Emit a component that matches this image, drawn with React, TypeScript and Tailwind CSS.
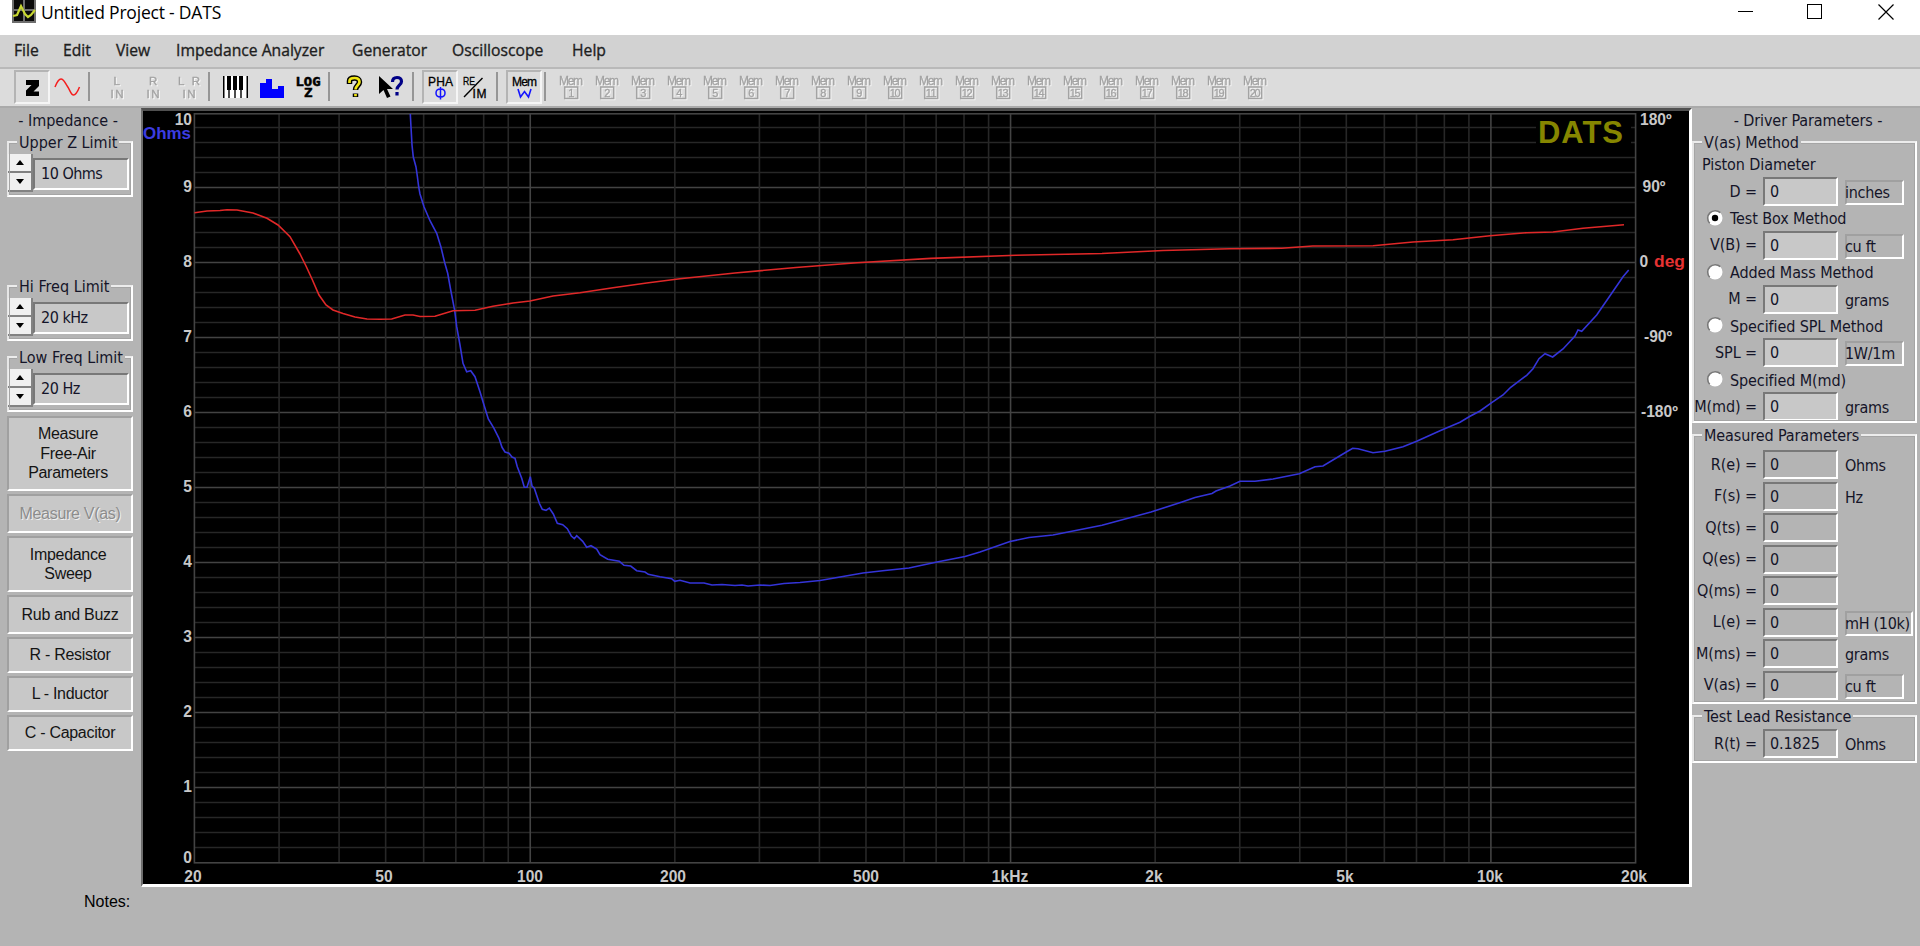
import type { ReactNode } from "react";

const UI_FONT = "font-['DejaVu_Sans_Condensed','DejaVu_Sans',sans-serif] text-[16px]";

const menus = [
  { name: "File", width: "w-[49px]" },
  { name: "Edit", width: "w-[53px]" },
  { name: "View", width: "w-[60px]" },
  { name: "Impedance Analyzer", width: "w-[176px]" },
  { name: "Generator", width: "w-[100px]" },
  { name: "Oscilloscope", width: "w-[120px]" },
  { name: "Help", width: "w-[60px]" },
];

const measured = [
  { label: "R(e) =", unit: "Ohms" },
  { label: "F(s) =", unit: "Hz" },
  { label: "Q(ts) =" },
  { label: "Q(es) =" },
  { label: "Q(ms) =" },
  { label: "L(e) =", unit: "mH (10k)", boxed: true, wide: true },
  { label: "M(ms) =", unit: "grams" },
  { label: "V(as) =", unit: "cu ft", boxed: true },
];

/* ---------- chart data, in window pixels ---------- */

const impedance =
  "410.3,114 411,127 412,145 413.3,157 416,167 417.3,176 418.7,187 420,194 424,206.7 430,220.7 436.7,233.3 441,247.3 444.7,262.7 447.7,273.3 450.7,290 454.7,310.7 456.7,326.7 460,345 463,363.3 466.7,371.7 470.7,370.7 475,376.7 480,391.7 483.3,402.7 488.3,419 494,428.3 499,438.3 502,447.3 505,452 509,453.3 512,457 515,458.3 517.3,466.7 521.7,478.3 524.3,487.3 527,487.3 529,481 530.3,476.7 532,486 534.3,488.3 539.3,503.3 542.3,509.3 546,510.3 549.3,508 553.3,514 557.3,523.3 562.7,524.7 567.3,528.7 571.3,536 574.3,538.7 576.7,535.7 582.7,541.3 586.7,547.3 591,545.7 596.7,549 600,554.7 607.7,559.3 619.3,561.3 624,565.3 630.7,566 636.7,570.7 645,572 648.3,574.3 660,576.7 671.7,578.7 674.7,581.3 680,580.3 690,583 704,583 712,585 722,584.5 735,585.5 742,585 748,586 760,585 770,585.5 784,583.5 800,582.5 820,580.5 840,577 863,573 885,570.5 909,568 937,562 965,556.5 980,552 1010,541.5 1029,537.5 1053,535 1102,525.3 1151,512 1182,502 1195,497.5 1212,493.5 1216,491 1230,486 1240,481.3 1255,481.3 1273,479 1299.3,473.7 1315,466.7 1323,466 1346.7,451.7 1352.7,448.3 1358,448.7 1373,452.7 1385,451.3 1403,446.7 1416.7,441.3 1440,430.7 1460,422.3 1470,416.3 1480,411 1491.7,402.7 1503,395 1510.7,387.3 1526.7,375.3 1533,368.7 1539,358.7 1545,353.7 1552.7,357 1563,349 1575,336 1578,330 1581.7,331.3 1596.7,315 1611.7,293.3 1623,276.7 1628.7,270";

const phase =
  "194.5,212.7 207,211 220,210.5 227,209.7 237,210 253,213 267,218.3 278,225 290,236.7 300,254 306,266 312,279 319,295 326,305 333,310 343,313.5 355,317 367,319 380,319.3 391.7,319 405,315 413,315 420,316.5 435,316.3 453,310.7 475,310.3 493,306.3 513,303 530,301 553,296 580,292.7 613,287.7 646.7,283 680,278.7 735,273 796,267.5 857,262.7 931,258.4 1016,255.3 1102,253.5 1163,250.5 1230,248.7 1281.7,248.3 1312.7,246 1373,245.7 1413,242 1453,239.7 1490,235.7 1526.7,232.7 1553,232 1583,228.3 1624,224.7";

const freqLines = [
  30, 40, 50, 60, 70, 80, 90, 100, 200, 300, 400, 500, 600, 700, 800, 900, 1000,
  2000, 3000, 4000, 5000, 6000, 7000, 8000, 9000, 10000,
];

const freqLabels: [number, string][] = [
  [193, "20"],
  [384, "50"],
  [530, "100"],
  [673, "200"],
  [866, "500"],
  [1010, "1kHz"],
  [1154, "2k"],
  [1345, "5k"],
  [1490, "10k"],
  [1634, "20k"],
];

const degLabels: [number, number, string][] = [
  [1640, 125, "180º"],
  [1642.5, 192, "90º"],
  [1639.5, 267, "0"],
  [1644, 342, "-90º"],
  [1641, 417, "-180º"],
];

const freqX = (f: number) => 194.5 + Math.log10(f / 20) * 480.33;

function Chart() {
  return (
    <div className="h-[779px] w-[1551px] shrink-0 border-t-[3px] border-r-[3px] border-b-[3px] border-l-2 border-t-[#505050] border-r-white border-b-white border-l-[#6e6e6e] bg-black">
      <svg viewBox="143 111 1546 773" width="1546" height="773" className="block">
        {Array.from({ length: 49 }, (_, i) => i + 1).map((i) => (
          <line
            key={i}
            x1="194"
            x2="1636"
            y1={862.6 - i * 15}
            y2={862.6 - i * 15}
            stroke={i % 5 === 0 ? "#434343" : "#272727"}
            strokeWidth="1.5"
          />
        ))}
        {freqLines.map((f) => (
          <line
            key={f}
            y1="113"
            y2="863"
            x1={freqX(f)}
            x2={freqX(f)}
            stroke={f === 100 || f === 1000 || f === 10000 ? "#434343" : "#272727"}
            strokeWidth="1.6"
          />
        ))}
        <rect x="194.4" y="113.8" width="1441.2" height="749" fill="none" stroke="#434343" strokeWidth="1.6" />
        <rect x="1536" y="116" width="95" height="30" fill="#000" />

        <polyline points={impedance} fill="none" stroke="#3434d8" strokeWidth="1.6" />
        <polyline points={phase} fill="none" stroke="#e02828" strokeWidth="1.6" />

        <g className="font-['Liberation_Sans',Arial,sans-serif] font-bold" fill="#c8c8c8" fontSize="15.6">
          {Array.from({ length: 11 }, (_, v) => (
            <text key={v} x="192" y={v === 10 ? 125 : v === 0 ? 863 : 867.3 - v * 75} textAnchor="end">
              {v}
            </text>
          ))}
          {freqLabels.map(([x, text]) => (
            <text key={text} x={x} y="881.5" textAnchor="middle">
              {text}
            </text>
          ))}
          {degLabels.map(([x, y, text]) => (
            <text key={text} x={x} y={y}>
              {text}
            </text>
          ))}
          <text x="143" y="138.5" fill="#3c3ce1" textLength="48" lengthAdjust="spacingAndGlyphs">
            Ohms
          </text>
          <text x="1654" y="267" fill="#e63232" textLength="31" lengthAdjust="spacingAndGlyphs">
            deg
          </text>
          <text x="1538" y="143" fill="#868600" fontSize="31" textLength="85">
            DATS
          </text>
        </g>
      </svg>
    </div>
  );
}

/* ---------- title bar, menu, toolbar ---------- */

function TitleBar() {
  return (
    <div className="flex h-[35px] items-start bg-white">
      <svg width="24" height="23" viewBox="0 0 24 23" className="ml-3">
        <rect width="24" height="23" fill="#6e6e6e" />
        <path d="M2 0h9v9H2zM13 0h9v9h-9zM2 11h9v10H2zM13 11h9v10h-9z" fill="#0a0a0a" />
        <path d="M1 16l4-1 4-9 4 8 3 3 3-2 4-5" fill="none" stroke="#c8d732" strokeWidth="2.2" />
      </svg>
      <span className="ml-[5px] font-['Open_Sans','Noto_Sans',sans-serif] text-[17.5px] leading-[25px] tracking-[-0.2px] text-black">
        Untitled Project - DATS
      </span>
      <svg width="156" height="16" viewBox="0 0 156 16" className="mt-1 mr-[26px] ml-auto" fill="none" stroke="#000" shapeRendering="crispEdges">
        <path d="M0 7.5h15" />
        <rect x="69.5" y="0.5" width="14" height="14" />
        <path d="M140.5 0.5l15 15M155.5 0.5l-15 15" shapeRendering="auto" strokeWidth="1.2" />
      </svg>
    </div>
  );
}

function MenuBar() {
  return (
    <div className="flex h-8 items-center bg-[#d2d2d2] pl-[14px] font-['Open_Sans','Noto_Sans',sans-serif] text-[15.7px] text-[#1e1e1e] [-webkit-text-stroke:0.35px_#1e1e1e]">
      {menus.map((m) => (
        <span key={m.name} className={`${m.width} whitespace-nowrap`}>
          {m.name}
        </span>
      ))}
    </div>
  );
}

function Tool({ pressed = false, children }: { pressed?: boolean; children: ReactNode }) {
  return (
    <div
      className={`h-[34px] w-9 shrink-0 border-2 ${
        pressed ? "border-t-[#b4b4b4] border-r-[#f5f5f5] border-b-[#f5f5f5] border-l-[#b4b4b4]" : "border-transparent"
      }`}
    >
      <svg viewBox="2 2 32 30" width="32" height="30" className="block font-['Liberation_Sans',Arial,sans-serif]">
        {children}
      </svg>
    </div>
  );
}

function Separator() {
  return (
    <div className="w-3 shrink-0 pl-[2px]">
      <div className="h-[29px] w-[2px] bg-[#969696]" />
    </div>
  );
}

// greyed-out input selector, e.g. "L" over "IN"
function InputLabel({ top, width }: { top: string; width: number }) {
  return (
    <g fill="#a3a3a3" stroke="#a3a3a3" strokeWidth=".4" fontSize="11.5" className="drop-shadow-[1px_1px_0_#fafafa]">
      <text x={19 - width / 2} y="15" textLength={width}>
        {top}
      </text>
      <text x="12.5" y="28" textLength="13">
        IN
      </text>
    </g>
  );
}

function MemorySlot({ n }: { n: number }) {
  return (
    <Tool>
      <g fill="#a3a3a3" stroke="#a3a3a3" strokeWidth=".3" className="drop-shadow-[1px_1px_0_#f5f5f5]">
        <text x="5" y="15" fontSize="12" textLength="24">
          Mem
        </text>
        <rect x="10.7" y="17" width="13" height="11.5" fill="none" strokeWidth="1.5" />
        <text x="17.2" y="27" fontSize="11" textAnchor="middle" textLength={n > 9 ? 11 : 6}>
          {n}
        </text>
      </g>
    </Tool>
  );
}

function Toolbar() {
  return (
    <div className="flex h-[39px] items-center border-t-2 border-t-[#b9b9b9] bg-[#dcdcdc] pb-[2px] pl-[14px]">
      <Tool pressed>
        <path d="M12 10h13v6l-5.500 5.500h5.500V26H12v-5.500l5.500-5.500H12z" fill="#000" />
      </Tool>
      <Tool>
        <path d="M5 17c2-5 4-8 6-8 3 0 4 4 6.500 7.500S21 25 23.500 25s4-3 6-8" fill="none" stroke="#f51e1e" strokeWidth="1.500" />
      </Tool>
      <Separator />
      <Tool>
        <InputLabel top="L" width={7} />
      </Tool>
      <Tool>
        <InputLabel top="R" width={8} />
      </Tool>
      <Tool>
        <InputLabel top="L R" width={22} />
      </Tool>
      <Separator />
      <Tool>
        <path d="M5 6h25v22H5z" fill="#fff" />
        <path d="M5 6h1.500v22H5zM9 6h4v14h-1.300v8h-1.400v-8H9zM15 6h4v14h-1.300v8h-1.400v-8H15zM21 6h4v14h-1.300v8h-1.400v-8H21zM28.500 6h1.500v22h-1.500z" fill="#000" />
      </Tool>
      <Tool>
        <path d="M6 28V13h6V9h6v10h6v-3h6v12z" fill="#00f" />
      </Tool>
      <Tool>
        <g fill="#000" stroke="#000" strokeWidth=".5" fontWeight="bold" className="font-['DejaVu_Sans_Mono',monospace]">
          <text x="5.500" y="15.500" fontSize="11.500" textLength="25" lengthAdjust="spacingAndGlyphs">
            LOG
          </text>
          <text x="14" y="26.500" fontSize="11.500" textLength="8.500" lengthAdjust="spacingAndGlyphs">
            Z
          </text>
        </g>
      </Tool>
      <Separator />
      <Tool>
        <path d="M11.500 14v-3c0-2 2-3 5-3s5 1.500 5 4c0 3-4 4-4 8M17.500 23.500v3.500" fill="none" stroke="#000" strokeWidth="5.500" />
        <path d="M11.500 13v-2c0-2 2-3 5-3s5 1.500 5 4c0 3-4 4-4 7.500M17.500 24v2.300" fill="none" stroke="#f0e614" strokeWidth="2.700" />
      </Tool>
      <Tool>
        <path d="M5 6v18l4.500-4 3.500 8 3.500-1.500-3.500-7.500h6z" fill="#000" />
        <path d="M18.500 12c0-3 2-4.500 4.500-4.500s4.500 1.500 4.500 4c0 3.500-4.500 4-4.500 8M23 22v3.500" fill="none" stroke="#000087" strokeWidth="3.200" />
      </Tool>
      <Separator />
      <Tool pressed>
        <text x="6" y="15.500" fontSize="12" textLength="25" stroke="#000" strokeWidth=".3">
          PHA
        </text>
        <path d="M18.500 17v12.500M18.500 19c-3 0-4.500 1.500-4.500 4s1.500 4 4.500 4 4.500-1.500 4.500-4-1.500-4-4.500-4z" fill="none" stroke="#1414ff" strokeWidth="1.500" />
      </Tool>
      <Tool>
        <g stroke="#000" strokeWidth=".3">
          <text x="5" y="15" fontSize="11" textLength="12" lengthAdjust="spacingAndGlyphs">
            RE
          </text>
          <text x="14.500" y="27.500" fontSize="12" textLength="14">
            IM
          </text>
        </g>
        <path d="M6 27L24.500 8" stroke="#000" strokeWidth="1.400" />
      </Tool>
      <Separator />
      <Tool pressed>
        <text x="6" y="16" fontSize="12" textLength="25" stroke="#000" strokeWidth=".3">
          Mem
        </text>
        <path d="M12 19l2.500 8 4-5.500 4 5.500 2.500-8" fill="none" stroke="#1414ff" strokeWidth="1.600" />
      </Tool>
      <Separator />
      {Array.from({ length: 20 }, (_, i) => (
        <MemorySlot key={i} n={i + 1} />
      ))}
    </div>
  );
}

/* ---------- side panels ---------- */

function Group({ title, className, children }: { title: string; className: string; children: ReactNode }) {
  return (
    <div className={`border-2 border-t-[#ececec] border-r-white border-b-white border-l-[#e6e6e6] outline outline-[#a5a5a5] -outline-offset-3 ${className}`}>
      <div className="relative -mt-[12px] ml-[8px] h-[22px] w-fit bg-[#b4b4b4] px-[2px] leading-[23px] whitespace-nowrap">
        {title}
      </div>
      {children}
    </div>
  );
}

function SpinButton({ down = false }: { down?: boolean }) {
  return (
    <button className="flex h-[19px] w-[25px] items-center justify-center border-r-2 border-b-2 border-r-[#828282] border-b-[#828282] bg-[#f0f0f0]">
      <svg width="8" height="5" viewBox="0 0 8 5">
        <path d={down ? "M0 0h8L4 5z" : "M0 5h8L4 0z"} fill="#000" />
      </svg>
    </button>
  );
}

function Spinner({ title, value, className = "" }: { title: string; value: string; className?: string }) {
  return (
    <Group title={title} className={`h-[56px] w-[126px] ${className}`}>
      <div className="mt-px -ml-px flex items-center">
        <div>
          <SpinButton />
          <SpinButton down />
        </div>
        <div className="mt-[2px] h-[32px] w-[96px] border-2 border-t-[#787878] border-r-white border-b-white border-l-[#787878] bg-[#c8c8c8] pl-[6px] leading-[28px] tracking-[-0.5px]">
          {value}
        </div>
      </div>
    </Group>
  );
}

function PanelButton({ lines, height, disabled = false }: { lines: string[]; height: string; disabled?: boolean }) {
  return (
    <button
      disabled={disabled}
      className={`flex w-[126px] flex-col items-center justify-center border-2 border-t-[#a0a0a0] border-r-white border-b-white border-l-[#a0a0a0] bg-[#c8c8c8] font-['Liberation_Sans',Arial,sans-serif] text-[16px] leading-[19.500px] tracking-[-0.3px] ${
        lines.length > 1 ? "pr-[4px]" : ""
      } ${height} ${disabled ? "text-[#8c8c8c] [text-shadow:1px_1px_0_#f0f0f0]" : "text-[#141414]"}`}
    >
      {lines.map((line) => (
        <span key={line}>{line}</span>
      ))}
    </button>
  );
}

function LeftPanel() {
  return (
    <div className={`flex w-[141px] shrink-0 flex-col pl-[7px] text-[#141428] ${UI_FONT}`}>
      <div className="mt-[2px] h-[22px] w-[122px] text-center leading-[22px]">- Impedance -</div>
      <Spinner title="Upper Z Limit" value="10 Ohms" className="mt-[9px]" />
      <Spinner title="Hi Freq Limit" value="20 kHz" className="mt-[88px]" />
      <Spinner title="Low Freq Limit" value="20 Hz" className="mt-[15px]" />
      <div className="mt-[4px] flex flex-col gap-[3px]">
        <PanelButton lines={["Measure", "Free-Air", "Parameters"]} height="h-[75px]" />
        <PanelButton lines={["Measure V(as)"]} height="h-[39px]" disabled />
        <PanelButton lines={["Impedance", "Sweep"]} height="h-[56px]" />
        <PanelButton lines={["Rub and Buzz"]} height="h-[39px]" />
        <PanelButton lines={["R - Resistor"]} height="h-[36px]" />
        <PanelButton lines={["L - Inductor"]} height="h-[36px]" />
        <PanelButton lines={["C - Capacitor"]} height="h-[36px]" />
      </div>
    </div>
  );
}

type FieldProps = {
  label: string;
  value?: string;
  unit?: string;
  boxed?: boolean;
  wide?: boolean;
  editable?: boolean;
};

function Field({ label, value = "0", unit, boxed, wide, editable }: FieldProps) {
  return (
    <div className="flex h-[29px] items-center whitespace-nowrap">
      <div className="flex w-[64px] justify-end pr-[1px]">{label}</div>
      <div
        className={`ml-[5px] h-[29px] w-[75px] border-2 border-t-[#787878] border-r-white border-b-white border-l-[#787878] pl-[5px] leading-[25px] ${
          editable ? "bg-[#c8c8c8]" : ""
        }`}
      >
        {value}
      </div>
      {unit && (
        <div
          className={`mt-[2px] ml-[7px] h-[25px] border-2 -indent-[2px] leading-[22px] tracking-[-0.3px] ${wide ? "w-[68px]" : "w-[59px]"} ${
            boxed ? "border-t-[#a0a0a0] border-r-white border-b-white border-l-[#a0a0a0]" : "border-transparent"
          }`}
        >
          {unit}
        </div>
      )}
    </div>
  );
}

function Radio({ label, checked = false }: { label: string; checked?: boolean }) {
  return (
    <div className="flex h-[24.75px] items-center pl-[12px] whitespace-nowrap">
      <svg width="18" height="18" viewBox="0 0 18 18" className="-mt-px">
        <circle cx="9" cy="9" r="7.500" fill="#fff" />
        <path d="M3.700 14.300A7.500 7.500 0 0 1 14.300 3.700" fill="none" stroke="#787878" strokeWidth="1.600" />
        {checked && <circle cx="9" cy="9" r="3.200" fill="#000" />}
      </svg>
      <span className="mt-[2px] ml-[6px]">{label}</span>
    </div>
  );
}

function RightPanel() {
  return (
    <div className={`w-[228px] shrink-0 tracking-[-0.1px] text-[#141428] ${UI_FONT}`}>
      <div className="mt-[2px] h-[22px] pl-[4px] text-center leading-[22px]">- Driver Parameters -</div>
      <Group title="V(as) Method" className="mt-[9px] h-[282px] w-[225px]">
        <div className="h-[24px] pl-[8px] leading-[24px]">Piston Diameter</div>
        <Field label="D =" unit="inches" boxed editable />
        <Radio label="Test Box Method" checked />
        <Field label="V(B) =" unit="cu ft" boxed editable />
        <Radio label="Added Mass Method" />
        <Field label="M =" unit="grams" editable />
        <Radio label="Specified SPL Method" />
        <Field label="SPL =" unit="1W/1m" boxed editable />
        <Radio label="Specified M(md)" />
        <Field label="M(md) =" unit="grams" editable />
      </Group>
      <Group title="Measured Parameters" className="mt-[11px] h-[270px] w-[225px]">
        <div className="mt-[4px] flex flex-col gap-[2.500px]">
          {measured.map((m) => (
            <Field key={m.label} {...m} />
          ))}
        </div>
      </Group>
      <Group title="Test Lead Resistance" className="mt-[11px] h-[48px] w-[225px]">
        <div className="mt-[2px]">
          <Field label="R(t) =" value="0.1825" unit="Ohms" />
        </div>
      </Group>
    </div>
  );
}

export default function App() {
  return (
    <div className="flex h-[946px] w-[1920px] flex-col overflow-hidden bg-[#b4b4b4]">
      <TitleBar />
      <MenuBar />
      <Toolbar />
      <div className="flex border-t-2 border-t-[#aaaaaa]">
        <LeftPanel />
        <Chart />
        <RightPanel />
      </div>
      <div className="mt-[3px] pl-[84px] font-['Liberation_Sans',Arial,sans-serif] text-[16px] text-black">Notes:</div>
    </div>
  );
}
